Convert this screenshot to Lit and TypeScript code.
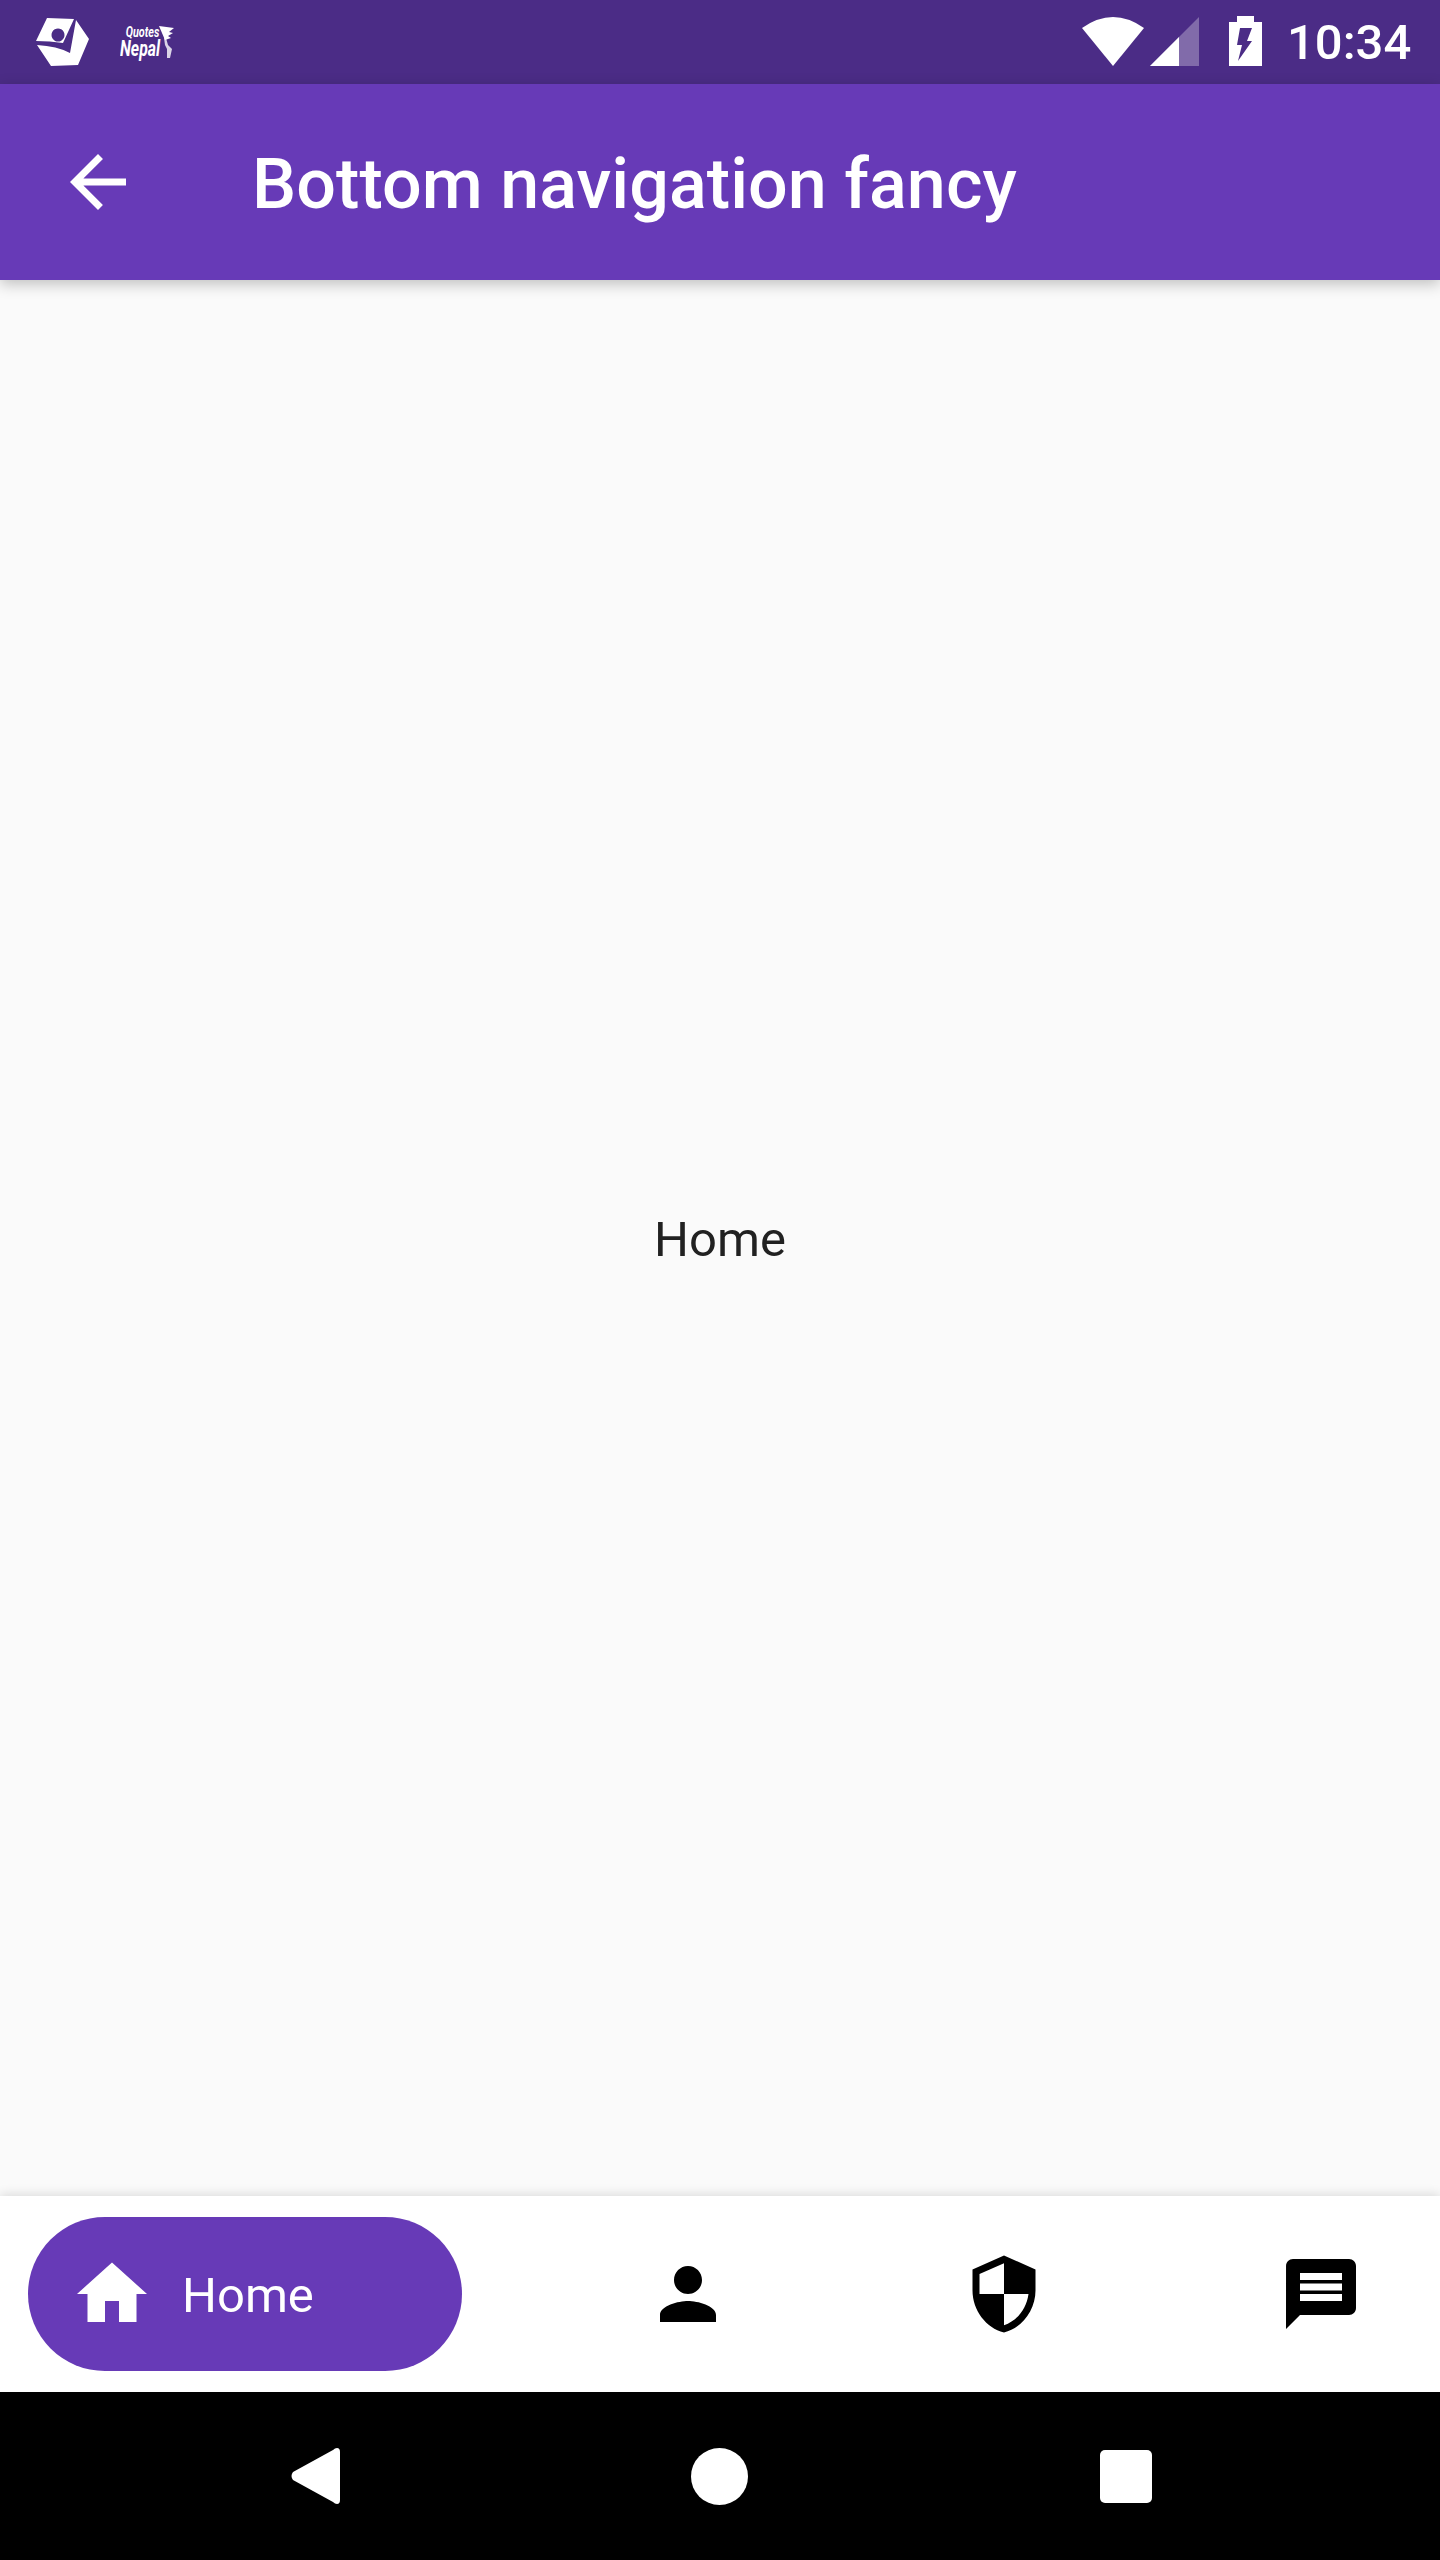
import { LitElement, html, css, svg } from 'lit';
import { customElement } from 'lit/decorators.js';

// material paths, 24 unit box drawn at 84px
const ICONS = {
  back: svg`<path d="M20 11H7.83l5.59-5.59L12 4l-8 8 8 8 1.41-1.41L7.83 13H20v-2z"/>`,
  home: svg`<path d="M10 20v-6h4v6h5v-8h3L12 3 2 12h3v8z"/>`,
  person: svg`<path d="M12 12c2.21 0 4-1.79 4-4s-1.79-4-4-4-4 1.79-4 4 1.79 4 4 4zm0 2c-2.67 0-8 1.34-8 4v2h16v-2c0-2.66-5.33-4-8-4z"/>`,
  security: svg`<path d="M12 1L3 5v6c0 5.55 3.84 10.74 9 12 5.16-1.26 9-6.45 9-12V5l-9-4zm0 10.99h7c-.53 4.12-3.28 7.79-7 8.94V12H5V6.3l7-3.11v8.8z"/>`,
  message: svg`<path d="M20 2H4c-1.1 0-1.99.9-1.99 2L2 22l4-4h14c1.1 0 2-.9 2-2V4c0-1.1-.9-2-2-2zm-2 12H6v-2h12v2zm0-3H6V9h12v2zm0-3H6V6h12v2z"/>`,
};

const icon = (name: keyof typeof ICONS) =>
  html`<svg class="icon" viewBox="0 0 24 24">${ICONS[name]}</svg>`;

@customElement('app-root')
export class AppRoot extends LitElement {
  static styles = css`
    :host {
      display: flex;
      flex-direction: column;
      height: 2560px;
      background: #fafafa;
      font-family: Roboto, sans-serif;
    }

    svg {
      display: block;
      flex: none;
      fill: currentColor;
    }

    .icon {
      width: 84px;
      height: 84px;
    }

    .status {
      display: flex;
      align-items: center;
      flex: none;
      height: 84px;
      padding: 0 30px;
      background: #4b2c86;
      color: #fff;
    }

    .logo-text {
      display: flex;
      flex-direction: column;
      align-items: flex-start;
      width: 38px;
      margin-left: 26px;
      font-style: italic;
      font-weight: 700;
      white-space: nowrap;
      transform: scaleX(0.72);
      transform-origin: left center;
    }

    .logo-text .small {
      margin-left: 8px;
      font-size: 15px;
      line-height: 13px;
    }

    .logo-text .big {
      font-size: 22px;
      line-height: 19px;
    }

    .spacer {
      flex: 1;
    }

    .signal {
      margin-left: 6px;
    }

    .battery {
      margin-left: 30px;
    }

    .time {
      width: 123px;
      margin-left: 25px;
      font-size: 49px;
      font-weight: 500;
      white-space: nowrap;
    }

    .appbar {
      position: relative;
      z-index: 1;
      display: flex;
      align-items: center;
      flex: none;
      height: 196px;
      padding-left: 56px;
      background: #673ab7;
      color: #fff;
      box-shadow: 0 4px 14px rgba(0, 0, 0, 0.24);
    }

    .title {
      margin-left: 112px;
      padding-top: 4px;
      font-size: 70px;
      font-weight: 500;
      letter-spacing: 0.06px;
    }

    main {
      display: flex;
      flex: 1;
      align-items: center;
      justify-content: center;
      padding-top: 2px;
      font-size: 49px;
      color: #212121;
    }

    .tabs {
      position: relative;
      display: flex;
      align-items: center;
      justify-content: space-between;
      flex: none;
      height: 196px;
      padding: 0 28px;
      background: #fff;
      box-shadow: 0 -2px 10px rgba(0, 0, 0, 0.12);
    }

    .pill {
      display: flex;
      align-items: center;
      gap: 28px;
      box-sizing: border-box;
      width: 434px;
      height: 154px;
      padding-left: 42px;
      border-radius: 77px;
      background: #673ab7;
      color: #fff;
      font-size: 49px;
    }

    .pill span {
      padding-top: 2px;
    }

    .tab {
      display: flex;
      justify-content: center;
      width: 182px;
      color: #000;
    }

    .sysnav {
      display: flex;
      align-items: center;
      justify-content: center;
      flex: none;
      height: 168px;
      background: #000;
      color: #fff;
    }

    .sysnav div {
      display: flex;
      justify-content: center;
      width: 405.5px;
    }

    .circle {
      margin-right: 2px;
    }

    .square {
      width: 52px;
      height: 53px;
      border-radius: 5px;
      background: #fff;
    }
  `;

  render() {
    return html`
      <div class="status">
        <svg width="64" height="62" viewBox="30 11 64 62">
          <path
            fill-rule="evenodd"
            d="M47 18L74 19L63 43Q50 41 36 41ZM58 28.500a6.500 6.500 0 1 0 .01 0Z"
          />
          <path d="M76 20L89 39L78 65L51 66L37 45Q57 46 70 53Z" />
        </svg>
        <div class="logo-text">
          <span class="small">Quotes</span>
          <span class="big">Nepal</span>
        </div>
        <svg width="18" height="34" viewBox="0 0 18 34">
          <path d="M1 1L16 3L11 7L15 8L10 11L13 13L7 15Z" />
          <path d="M6 13L8 13L10 20L14 24L12 33L9 33L9 24L7 20Z" opacity=".8" />
        </svg>
        <div class="spacer"></div>
        <svg width="62" height="52" viewBox="0 0 62 52">
          <path d="M0 12Q31 -10 62 12L31 50Z" />
        </svg>
        <svg class="signal" width="49" height="52" viewBox="0 0 49 52">
          <path d="M0 50L49 1V50Z" opacity=".3" />
          <path d="M0 50L29 21V50Z" />
        </svg>
        <svg class="battery" width="33" height="52" viewBox="0 0 33 52">
          <path
            fill-rule="evenodd"
            d="M8 0H25V6H33V50H0V6H8ZM11 12H23L18 25H23L9 45L13 29H8Z"
          />
        </svg>
        <span class="time">10:34</span>
      </div>
      <header class="appbar">
        ${icon('back')}
        <span class="title">Bottom navigation fancy</span>
      </header>
      <main>Home</main>
      <nav class="tabs">
        <div class="pill">${icon('home')}<span>Home</span></div>
        <div class="tab">${icon('person')}</div>
        <div class="tab">${icon('security')}</div>
        <div class="tab">${icon('message')}</div>
      </nav>
      <div class="sysnav">
        <div>
          <svg width="50" height="58" viewBox="0 0 50 58">
            <path
              d="M47 1Q50 1 50 5V53Q50 57 47 57Q45 57 43 55L3 33Q0 29 3 25L43 3Q45 1 47 1Z"
            />
          </svg>
        </div>
        <div>
          <svg class="circle" width="57" height="57" viewBox="0 0 57 57">
            <circle cx="28.500" cy="28.500" r="28.500" />
          </svg>
        </div>
        <div><span class="square"></span></div>
      </div>
    `;
  }
}
